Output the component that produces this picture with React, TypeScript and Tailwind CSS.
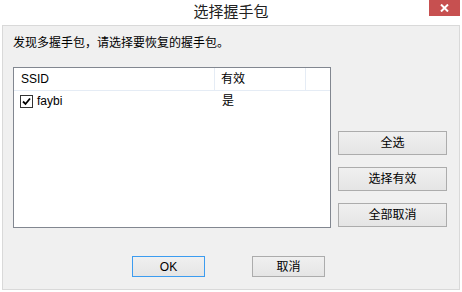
import React from 'react';

const font = { fontFamily: '"Liberation Sans", "Noto Sans CJK SC", sans-serif' };

function Btn({ label, primary, className }: { label: string; primary?: boolean; className?: string }) {
  return (
    <button
      className={`flex items-center justify-center border bg-gradient-to-b from-[#f0f0f0] to-[#e5e5e5] text-[12px] leading-none text-black ${
        primary ? 'border-[#3c9cf0]' : 'border-[#acacac]'
      } ${className ?? ''}`}
    >
      {label}
    </button>
  );
}

function Check() {
  return (
    <span className="flex h-[13px] w-[13px] items-center justify-center border border-[#333333] bg-white">
      <svg width="9" height="9" viewBox="0 0 9 9">
        <path d="M1 4.5 L3.5 7 L8 1.5" fill="none" stroke="#000" strokeWidth="1.8" />
      </svg>
    </span>
  );
}

export default function App() {
  return (
    <div className="flex h-[292px] w-[462px] flex-col bg-white text-black" style={font}>
      {/* Title bar */}
      <div className="grid h-[25px] grid-cols-[1fr_auto_1fr]">
        <div />
        <div className="pt-[3px] text-[15px] leading-[18px] text-[#222]">选择握手包</div>
        <div className="flex justify-end pr-[2px]">
          <div className="flex h-[16px] w-[31px] items-center justify-center bg-[#c75050]">
            <svg width="9" height="8" viewBox="0 0 9 8">
              <path d="M1 0.5 L8 7.5 M8 0.5 L1 7.5" stroke="#fff" strokeWidth="2" />
            </svg>
          </div>
        </div>
      </div>

      {/* Client area */}
      <div className="mx-[2px] flex h-[265px] flex-col border border-[#d9d9d9] bg-[#f0f0f0]">
        <div className="pl-[10px] pt-[9px] text-[12px] leading-[16px]">发现多握手包，请选择要恢复的握手包。</div>

        <div className="mt-[16px] flex">
          {/* List view */}
          <div className="ml-[10px] flex h-[161px] w-[318px] flex-col border border-[#828790] bg-white text-[12px]">
            <div className="flex h-[23px] border-b border-[#e5ecf5]">
              <div className="flex w-[201px] items-center border-r border-[#e5ecf5] pl-[7px]">SSID</div>
              <div className="flex w-[91px] items-center border-r border-[#e5ecf5] pl-[6px]">有效</div>
            </div>
            <div className="flex h-[20px] items-center">
              <div className="flex w-[201px] items-center gap-[4px] pl-[6px]">
                <Check />
                <span>faybi</span>
              </div>
              <div className="pl-[7px]">是</div>
            </div>
          </div>

          {/* Side buttons */}
          <div className="ml-[7px] flex flex-col gap-[12px] pt-[64px]">
            <Btn label="全选" className="h-[24px] w-[109px]" />
            <Btn label="选择有效" className="h-[24px] w-[109px]" />
            <Btn label="全部取消" className="h-[24px] w-[109px]" />
          </div>
        </div>

        <div className="ml-[129px] mt-[28px] flex gap-[47px]">
          <Btn label="OK" primary className="h-[21px] w-[73px]" />
          <Btn label="取消" className="h-[21px] w-[73px]" />
        </div>
      </div>
    </div>
  );
}
